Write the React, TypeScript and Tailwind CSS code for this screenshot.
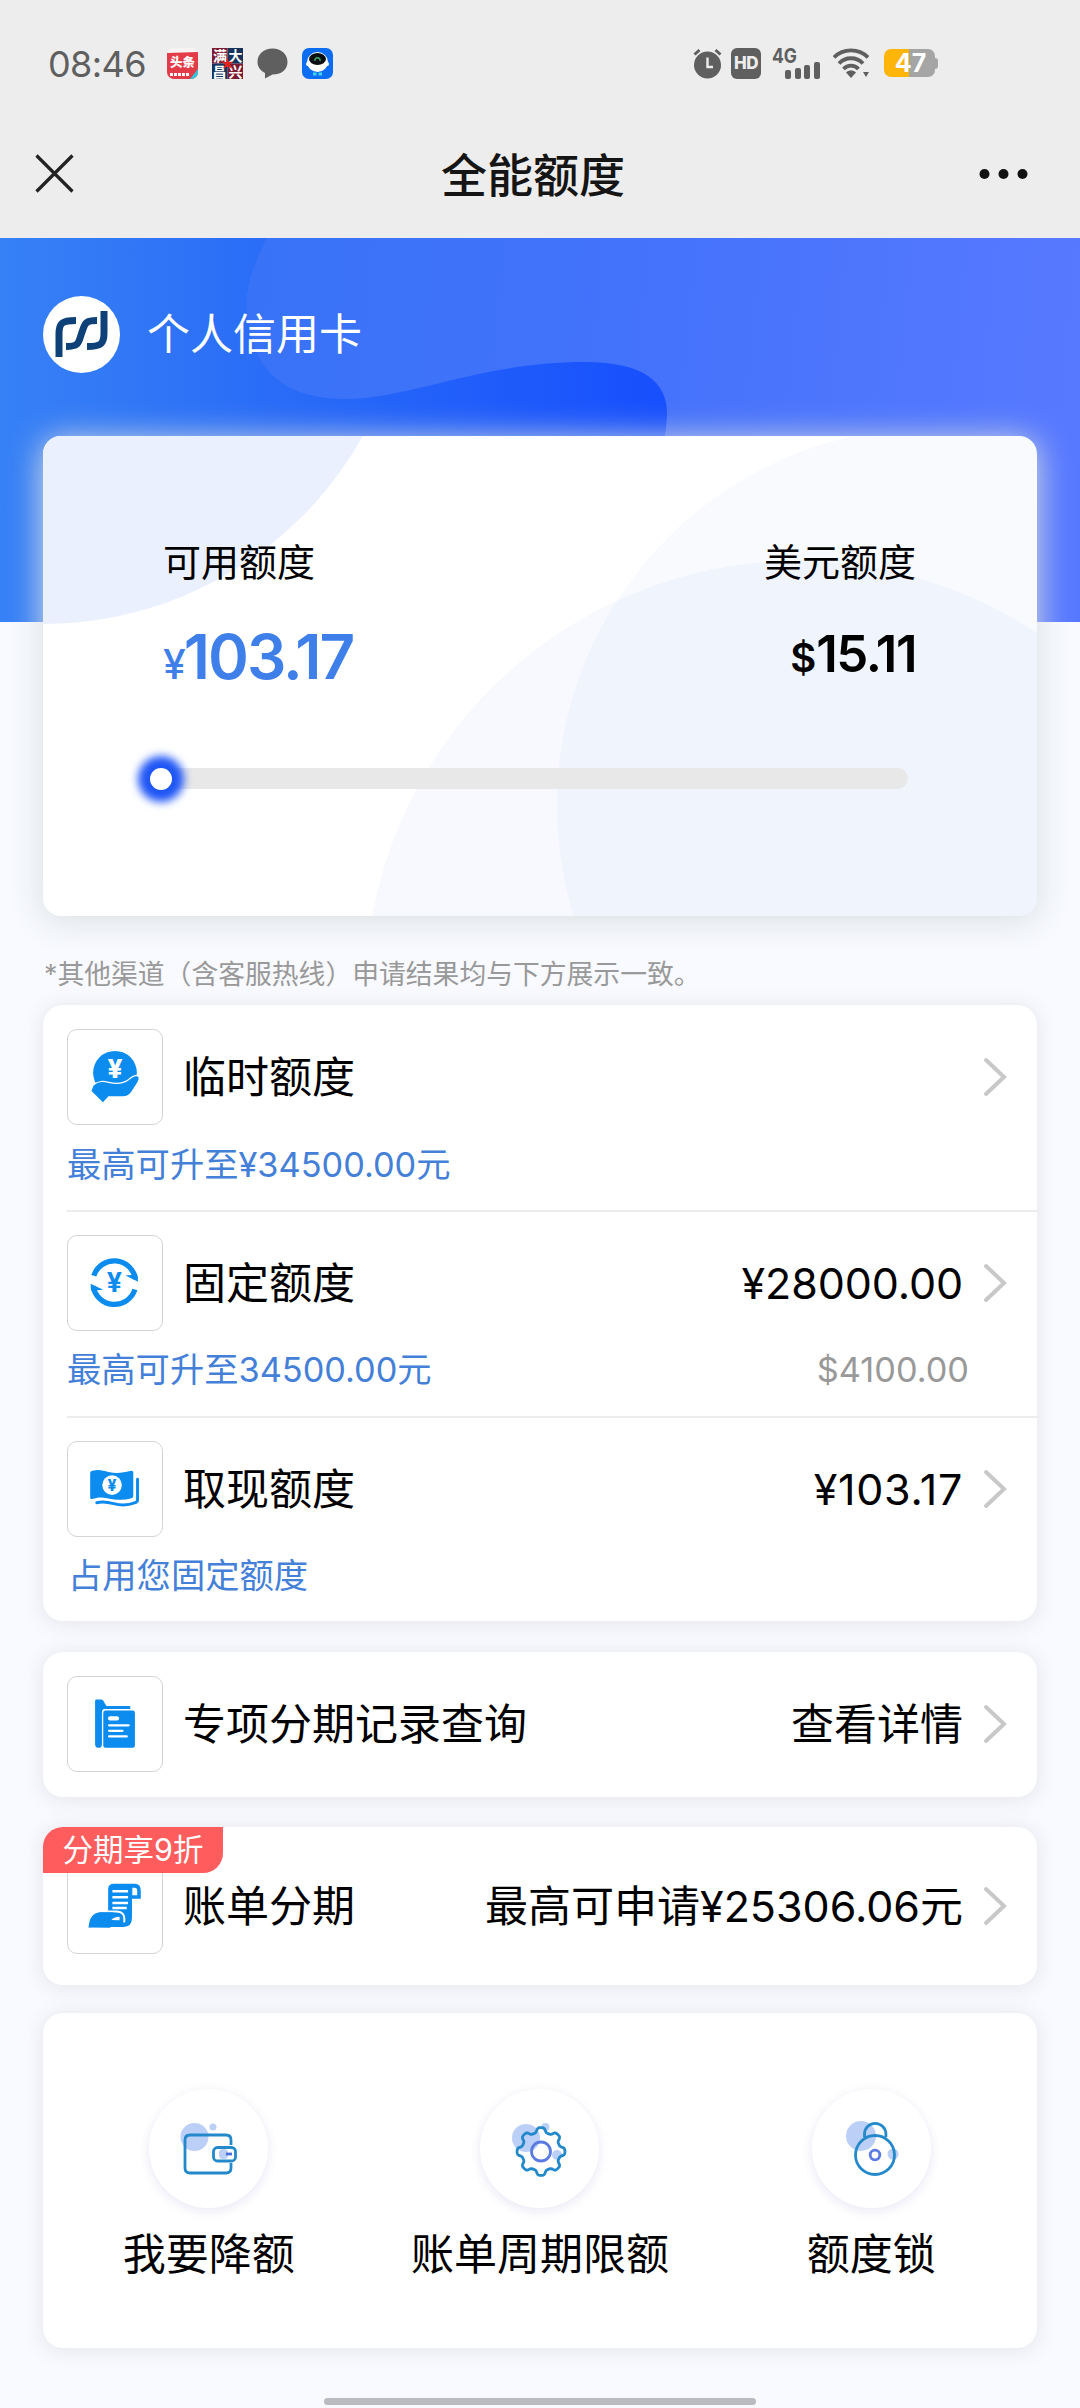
import type { ReactNode } from "react";

const BLUE = "#0b8cee";

function StatusBar() {
  return (
    <div className="flex h-[126px] items-center text-[#5f5f5f]">
      <span className="ml-[48px] w-[119px] pt-[2px] text-[36px] leading-none tracking-[-0.600px]">08:46</span>

      {/* Notification icons */}
      <div className="flex items-center gap-[14px]">
        <svg width="31" height="31" viewBox="0 0 31 31">
          <rect width="31" height="31" rx="7" fill="#f7f3f3" />
          <path d="M0 5 31 4V24a7 7 0 0 1-7 7H7a7 7 0 0 1-7-7Z" fill="#e33b48" />
          <path d="M31 21v3a7 7 0 0 1-7 7h-1Z" fill="#2cc6dd" />
          <text x="15.500" y="19" textAnchor="middle" fontSize="12.500" fontWeight="900" fill="#fff">头条</text>
          <path d="M3 26.500H22" stroke="#fff" strokeWidth="3" strokeDasharray="3 1" />
        </svg>
        <svg width="31" height="31" viewBox="0 0 31 31">
          <path d="M0 0h15.500v15.500H0zM15.500 15.500H31V31H15.500z" fill="#7d1930" />
          <path d="M15.500 0H31v15.500H15.500zM0 15.500h15.500V31H0z" fill="#16335c" />
          <g fontSize="14" fontWeight="700" fill="#fff" textAnchor="middle">
            <text x="8" y="13">满</text>
            <text x="23.500" y="12.500">大</text>
            <text x="7.500" y="29">昌</text>
            <text x="23.500" y="29">兴</text>
          </g>
          <path d="m15.500 10 1.500 4 4-.5-3 3 2 4-4.500-2-4.500 2 2-4-3-3 4 .5Z" fill="#e0211c" />
        </svg>
        <svg width="31" height="31" viewBox="0 0 31 31">
          <path d="M15.500.5C24 .5 30.500 6 30.500 14S24 26.500 15.500 26.500L8 30.500V25C3.500 22.500.5 19 .5 14 .5 6 7 .5 15.500.5Z" fill="#5f5f5f" />
        </svg>
        <svg width="31" height="31" viewBox="0 0 31 31">
          <rect width="31" height="31" rx="7" fill="#0c6df2" />
          <ellipse cx="15.500" cy="14" rx="10.500" ry="10" fill="#fff" />
          <circle cx="6" cy="16" r="2" fill="#fff" />
          <circle cx="25" cy="16" r="2" fill="#fff" />
          <ellipse cx="15.500" cy="11" rx="8.500" ry="6" fill="#0b0f14" />
          <path d="M13 13a2.600 2.600 0 1 1 5 0" fill="none" stroke="#3fae6c" strokeWidth="1.400" />
          <path d="M11 26h3.500M16.500 26H20" stroke="#43d3e8" strokeWidth="3" />
        </svg>
      </div>

      {/* System icons */}
      <svg className="ml-[360px]" width="29" height="31" viewBox="0 0 29 31">
        <circle cx="14.500" cy="17" r="13.500" fill="#5f5f5f" />
        <path d="m1.500 6.500 5-4.500M27.500 6.500l-5-4.500" stroke="#5f5f5f" strokeWidth="3" />
        <path d="M14.500 9.500V19H20" fill="none" stroke="#ededed" strokeWidth="2.400" />
      </svg>
      <div className="ml-[9px] flex h-[31px] w-[30px] items-center justify-center rounded-[6px] bg-[#5f5f5f] text-[17px] font-extrabold leading-none tracking-[-0.500px] text-[#ededed]">
        HD
      </div>
      <svg className="ml-[11px]" width="50" height="43" viewBox="0 -6 50 43" fill="#5f5f5f">
        <text x="0" y="15" fontSize="20" fontWeight="700" textLength="25" lengthAdjust="spacingAndGlyphs">4G</text>
        <rect x="13" y="22" width="6" height="9" rx="2" />
        <rect x="23" y="20" width="6" height="11" rx="2" />
        <rect x="32" y="17" width="6" height="14" rx="2" />
        <rect x="42" y="14" width="6" height="17" rx="2" />
      </svg>
      <svg className="ml-[11px]" width="36" height="30" viewBox="0 0 36 30" fill="none" stroke="#5f5f5f" strokeWidth="3.800">
        <path d="M1 9.500C10 0 26 0 35 9.500" />
        <path d="M6 15.500c6.500-7 17.500-7 24 0" />
        <path d="M10.500 21c4-4.500 11-4.500 15 0" />
        <path d="M13 24.500c3-2.600 7-2.600 10 0L18 30Z" fill="#5f5f5f" stroke="none" />
        <path d="M30 24h6l-3 5Z" fill="#5f5f5f" stroke="none" />
      </svg>
      <div className="ml-[15px] flex items-center">
        <div className="flex h-[28px] w-[51px] items-center justify-center rounded-[7px] bg-linear-to-r from-[#fdb509] from-50% to-[#a5a5a5] to-50% pl-[2px] text-[25px] font-bold leading-none text-white">
          47
        </div>
        <div className="h-[11px] w-[3px] rounded-r-sm bg-[#a5a5a5]" />
      </div>
    </div>
  );
}

function TitleBar() {
  return (
    <div className="flex h-[112px] items-center justify-between pb-[17px] pl-[35px] pr-[51px]">
      <svg width="39" height="39" viewBox="0 0 39 39" stroke="#222" strokeWidth="3.200">
        <path d="m1.500 1.500 36 36M37.500 1.500l-36 36" />
      </svg>
      <h1 className="pl-[13px] pt-[2px] text-[46px] font-medium leading-none text-[#151515]">全能额度</h1>
      <svg width="50" height="12" viewBox="0 0 50 12" fill="#111">
        <circle cx="5.500" cy="6" r="5" />
        <circle cx="24.500" cy="6" r="5" />
        <circle cx="43.500" cy="6" r="5" />
      </svg>
    </div>
  );
}

function BankLogo() {
  return (
    <svg width="77" height="77" viewBox="0 0 77 77">
      <circle cx="38.500" cy="38.500" r="38.500" fill="#fff" />
      <g fill="none" stroke="#0e4178" strokeWidth="7">
        <path d="M16 61V38C16 27 19 24.500 33 24.500" />
        <path d="M54 24.500C41 24.500 42 28 38.500 37.500 35.500 47 36 50.500 23 50.500" />
        <path d="M61 15V37C61 48 58 50.500 44 50.500" />
      </g>
    </svg>
  );
}

function Chevron() {
  return (
    <svg className="ml-[20px] shrink-0" width="24" height="40" viewBox="0 0 24 40" fill="none" stroke="#c8c8c8" strokeWidth="4" strokeLinecap="round">
      <path d="M3 3 21 20 3 37" />
    </svg>
  );
}

/* Row icons, drawn on a 288 grid that covers the bordered tile */
function Tile({ children }: { children: ReactNode }) {
  return (
    <div className="h-[96px] w-[96px] shrink-0 rounded-[10px] border border-[#d4d4d4]">
      <svg className="h-full w-full" viewBox="0 0 288 288">
        {children}
      </svg>
    </div>
  );
}

const tempIcon = (
  <Tile>
    <circle cx="144" cy="131" r="67" fill={BLUE} />
    <text x="144" y="147" textAnchor="middle" fontSize="80" fontWeight="800" fill="#fff">¥</text>
    <path
      d="M78 171C94 156 108 158 124 162 150 168 170 166 186 154 196 146 206 138 214 143 220 147 214 158 208 167L194 189Q184 203 168 203H124L107 221 72 187Z"
      fill={BLUE}
      stroke="#fff"
      strokeWidth="7"
      paintOrder="stroke"
    />
  </Tile>
);

const fixedIcon = (
  <Tile>
    <g fill="none" stroke={BLUE} strokeWidth="16">
      <path d="M79 122A66 66 0 0 1 207 132" />
      <path d="M205 164A66 66 0 0 1 77 154" />
    </g>
    <path d="M176 121 215 140 212 118ZM108 165 69 146 72 168Z" fill={BLUE} />
    <text x="142" y="173" textAnchor="middle" fontSize="82" fontWeight="700" fill={BLUE}>¥</text>
  </Tile>
);

const cashIcon = (
  <Tile>
    <path d="M68 94Q68 89 75 88C95 83 108 88 124 92 150 98 170 94 190 89Q200 86 200 94V166Q200 172 192 173C170 178 150 178 120 172 100 168 88 170 74 175Q68 177 68 170Z" fill={BLUE} />
    <path d="M213 114V178Q213 184 206 186C185 194 165 196 140 189 115 182 104 182 88 186" fill="none" stroke={BLUE} strokeWidth="9" strokeLinecap="round" />
    <circle cx="135" cy="132" r="30" fill="#fff" />
    <text x="135" y="150" textAnchor="middle" fontSize="48" fontWeight="800" fill={BLUE}>¥</text>
  </Tile>
);

const recordIcon = (
  <Tile>
    <path d="M83 73Q83 69 88 69H102Q108 69 112 80L118 89H188Q191 89 191 93V98H113Q104 98 104 108V205Q104 217 94 217 83 217 83 205Z" fill={BLUE} />
    <rect x="108" y="103" width="97" height="114" rx="7" fill={BLUE} />
    <g stroke="#fff" strokeWidth="7" strokeLinecap="round">
      <path d="M129 127H150" strokeWidth="13" />
      <path d="M126 148H186M126 165H167M126 182H180" />
    </g>
  </Tile>
);

const billIcon = (
  <Tile>
    <path d="M140 76H205Q223 76 223 96V122H196V180Q196 208 170 208H123V93Q123 76 140 76Z" fill={BLUE} />
    <path d="M197 88V111H212V97Q212 88 204 88Z" fill="#fff" />
    <path d="M136 99H184M136 117H184M136 135H184M136 150H180" stroke="#fff" strokeWidth="8" />
    <path d="M63 210Q66 165 98 161H145Q177 159 172 194" fill={BLUE} stroke="#fff" strokeWidth="6" />
    <path d="M63 210Q66 165 98 163H135Q160 165 160 190L128 211Z" fill={BLUE} />
    <path d="M133 187Q142 177 158 177L158 188Z" fill="#fff" />
  </Tile>
);

type LimitRowProps = {
  icon: ReactNode;
  title: string;
  value?: string;
  valueClass?: string;
};

function LimitRow({ icon, title, value, valueClass = "" }: LimitRowProps) {
  return (
    <div className="flex h-[96px] items-center pr-[30px]">
      {icon}
      <span className="ml-[20px] text-[43px] leading-none">{title}</span>
      <span className={`ml-auto text-[43px] leading-none ${valueClass}`}>{value}</span>
      <Chevron />
    </div>
  );
}

function Card({ className, children }: { className: string; children: ReactNode }) {
  return (
    <section className={`rounded-[20px] bg-white pl-[24px] shadow-[0_2px_18px_3px_rgba(120,125,135,0.13)] ${className}`}>
      {children}
    </section>
  );
}

function gearPath(cx: number, cy: number) {
  const points: string[] = [];
  for (let i = 0; i < 180; i++) {
    const a = (i / 180) * Math.PI * 2;
    const r = 21.600 + 2.400 * Math.tanh(2 * Math.cos(8 * a));
    points.push(`${(cx + r * Math.cos(a)).toFixed(2)} ${(cy + r * Math.sin(a)).toFixed(2)}`);
  }
  return `M${points.join("L")}Z`;
}

function Action({ label, children }: { label: string; children: ReactNode }) {
  return (
    <div className="flex flex-1 flex-col items-center">
      <div className="h-[119px] w-[119px] rounded-full bg-white shadow-[0_3px_10px_1px_rgba(90,90,180,0.12)]">
        <svg width="119" height="119" viewBox="0 0 119 119" fill="none" stroke="#2489ca" strokeWidth="2.800">
          {children}
        </svg>
      </div>
      <span className="mt-[25px] text-[43px] leading-none">{label}</span>
    </div>
  );
}

export default function App() {
  return (
    <div className="flex h-[2408px] w-[1080px] flex-col overflow-hidden bg-[#f8faff] font-[Inter,'Noto_Sans_CJK_SC',sans-serif] text-black">
      <header className="h-[238px] shrink-0 bg-[#ededed]">
        <StatusBar />
        <TitleBar />
      </header>

      {/* Banner */}
      <div className="relative h-[198px] shrink-0">
        <svg className="absolute left-0 top-0" width="1080" height="384" viewBox="0 0 1080 384">
          <defs>
            <linearGradient id="base" x1="0" x2="1">
              <stop offset="0" stopColor="#3681f6" />
              <stop offset="0.060" stopColor="#347cf6" />
              <stop offset="0.250" stopColor="#2a6cf7" />
              <stop offset="0.620" stopColor="#174ffd" />
            </linearGradient>
            <linearGradient id="wave" gradientUnits="userSpaceOnUse" x1="250" y1="0" x2="1080" y2="80">
              <stop offset="0" stopColor="#3873f7" />
              <stop offset="0.450" stopColor="#4372fb" />
              <stop offset="1" stopColor="#5779ff" />
            </linearGradient>
          </defs>
          <rect width="1080" height="384" fill="url(#base)" />
          <path
            d="M267 0C252 30 245 50 247 75 250 110 265 161 344 161 410 161 480 124 585 124 645 124 667 145 667 175 667 200 655 240 640 384H1080V0Z"
            fill="url(#wave)"
          />
        </svg>
        <div className="relative flex items-center pl-[43px] pt-[58px]">
          <BankLogo />
          <span className="ml-[27px] text-[43px] leading-none text-white">个人信用卡</span>
        </div>
      </div>

      {/* Credit summary */}
      <section className="relative mx-[43px] h-[480px] shrink-0 rounded-[18px] bg-white shadow-[0_4px_32px_2px_rgba(218,222,224,0.95)]">
        <svg className="absolute inset-0 rounded-[18px]" width="994" height="480" viewBox="43 436 994 480">
          <circle cx="43" cy="258" r="366" fill="#eaf0fd" />
          <circle cx="798" cy="994" r="433" fill="#3b6cf0" fillOpacity="0.042" />
          <circle cx="935" cy="805" r="378" fill="#5590ee" fillOpacity="0.042" />
        </svg>
        <div className="relative flex justify-between pl-[120px] pr-[121px] pt-[107px]">
          <div>
            <p className="text-[38px] leading-[38px]">可用额度</p>
            <p className="mt-[43px] flex items-baseline font-semibold leading-[66px] text-[#3f7fea]">
              <span className="text-[41px] font-medium tracking-[-2px]">¥</span>
              <span className="text-[62px] tracking-[-2px]">103.17</span>
            </p>
          </div>
          <div className="text-right">
            <p className="text-[38px] leading-[38px]">美元额度</p>
            <p className="mt-[40px] flex items-baseline justify-end font-semibold leading-[66px]">
              <span className="text-[40px]">$</span>
              <span className="text-[51px] tracking-[-1.500px]">15.11</span>
            </p>
          </div>
        </div>
        <div className="relative ml-[107px] mr-[129px] mt-[71px] flex h-[21px] items-center rounded-full bg-[#e8e8e8]">
          <div className="h-[22px] w-[22px] rounded-full bg-white shadow-[0_0_9px_12px_#1f56f6]" />
        </div>
      </section>

      <p className="ml-[44px] mt-[45px] text-[26.800px] leading-[27px] text-[#999]">
        *其他渠道（含客服热线）申请结果均与下方展示一致。
      </p>

      <main className="mt-[17px] flex flex-col px-[43px]">
        <Card className="h-[616px] pt-[24px]">
          <div className="h-[183px] border-b-2 border-[#ececec]">
            <LimitRow icon={tempIcon} title="临时额度" />
            <p className="mt-[20px] text-[34.300px] leading-[40px] text-[#4480d8]">最高可升至¥34500.00元</p>
          </div>
          <div className="h-[206px] border-b-2 border-[#ececec] pt-[23px]">
            <LimitRow icon={fixedIcon} title="固定额度" value="¥28000.00" valueClass="tracking-[-0.100px]" />
            <div className="mt-[19px] flex justify-between pr-[68px] text-[34.300px] leading-[40px]">
              <span className="text-[#4480d8]">最高可升至34500.00元</span>
              <span className="text-[#999]">$4100.00</span>
            </div>
          </div>
          <div className="pt-[23px]">
            <LimitRow icon={cashIcon} title="取现额度" value="¥103.17" valueClass="tracking-[0.700px]" />
            <p className="ml-px mt-[19px] text-[34.300px] leading-[40px] text-[#4480d8]">占用您固定额度</p>
          </div>
        </Card>

        <Card className="mt-[31px] h-[145px] pt-[24px]">
          <LimitRow icon={recordIcon} title="专项分期记录查询" value="查看详情" />
        </Card>

        <Card className="relative mt-[30px] h-[158px] pt-[31px]">
          <LimitRow icon={billIcon} title="账单分期" value="最高可申请¥25306.06元" />
          <div className="absolute left-0 top-0 flex h-[46px] w-[180px] items-center justify-center rounded-br-[20px] rounded-tl-[20px] bg-[#ff5c5d] text-[30.500px] leading-none text-white">
            分期享9折
          </div>
        </Card>

        <Card className="mt-[28px] flex h-[335px] pr-[24px] pt-[76px]">
          <div className="-mx-[24px] flex flex-1">
            <Action label="我要降额">
              <g fill="#bccff7" stroke="none">
                <circle cx="45.500" cy="48" r="14" />
                <circle cx="64" cy="38" r="3.500" />
                <rect x="70" y="60" width="9" height="10" rx="4" />
              </g>
              <path d="M82 56V51Q82 46 77 46H41Q36 46 36 51V79Q36 84 41 84H77Q82 84 82 79V74" />
              <rect x="64.500" y="58.500" width="22" height="13.500" rx="4" />
              <path d="M77 65H83" stroke="#4a6fdc" />
            </Action>
            <Action label="账单周期限额">
              <g fill="#bccff7" stroke="none">
                <circle cx="46" cy="49" r="14" />
                <circle cx="65.500" cy="38" r="4" />
                <circle cx="77" cy="66" r="5" />
              </g>
              <path d={gearPath(61, 62.500)} />
              <circle cx="61" cy="62.500" r="9.500" stroke="#5b7be0" />
            </Action>
            <Action label="额度锁">
              <g fill="#bccff7" stroke="none">
                <circle cx="49" cy="47" r="15" />
                <circle cx="81" cy="65" r="5.500" />
              </g>
              <circle cx="63" cy="66" r="19.500" />
              <path d="M52.500 48V45a10.700 10.700 0 0 1 21.400 0V48" />
              <circle cx="63" cy="66" r="4.800" stroke="#5b7be0" />
            </Action>
          </div>
        </Card>
      </main>

      {/* Home indicator */}
      <div className="mx-auto mt-[50px] h-[7px] w-[432px] shrink-0 rounded-full bg-[#b9bbc0]" />
    </div>
  );
}
